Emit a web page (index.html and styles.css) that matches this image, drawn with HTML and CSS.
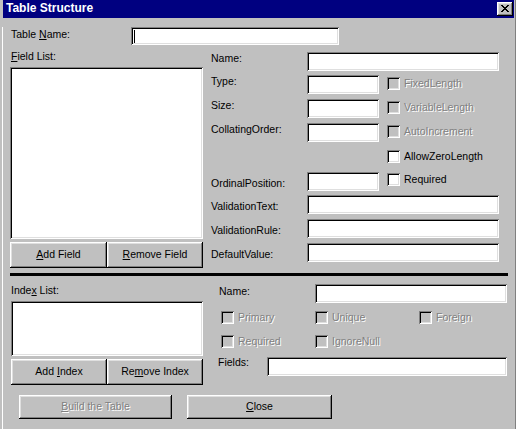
FILE: index.html
```html
<!DOCTYPE html>
<html>
<head>
<meta charset="utf-8">
<title>Table Structure</title>
<link rel="stylesheet" href="styles.css">
</head>
<body>
<div class="window">
  <div class="titlebar">
    <span class="title">Table Structure</span>
    <span class="closebtn"><svg width="8" height="7" viewBox="0 0 8 7" shape-rendering="crispEdges"><path fill="#000" d="M0 0h2v1H0zM6 0h2v1H6zM1 1h2v1H1zM5 1h2v1H5zM2 2h4v1H2zM3 3h2v1H3zM2 4h4v1H2zM1 5h2v1H1zM5 5h2v1H5zM0 6h2v1H0zM6 6h2v1H6z"/></svg></span>
  </div>
  <div class="content">
    <div class="tn-row">
      <span class="lbl tn-lbl">Table <u>N</u>ame:</span>
      <div class="field tn-input"><span class="caret"></span></div>
    </div>

    <div class="upper">
      <div class="fl-col">
        <div class="lbl list-lbl"><u>F</u>ield List:</div>
        <div class="listbox fl-box"></div>
        <div class="btnpair">
          <div class="btn b97"><span><u>A</u>dd Field</span></div>
          <div class="btn b96"><span><u>R</u>emove Field</span></div>
        </div>
      </div>

      <div class="props">
        <div class="prow r1">
          <span class="plbl">Name:</span>
          <div class="field wide"></div>
        </div>
        <div class="prow r2">
          <span class="plbl">Type:</span>
          <div class="field small"></div>
          <div class="chk dis"><span class="box"></span><span class="ctext">FixedLength</span></div>
        </div>
        <div class="prow r3">
          <span class="plbl">Size:</span>
          <div class="field small"></div>
          <div class="chk dis"><span class="box"></span><span class="ctext">VariableLength</span></div>
        </div>
        <div class="prow r4">
          <span class="plbl">CollatingOrder:</span>
          <div class="field small"></div>
          <div class="chk dis"><span class="box"></span><span class="ctext">AutoIncrement</span></div>
        </div>
        <div class="prow r5">
          <div class="chk solo"><span class="box"></span><span class="ctext">AllowZeroLength</span></div>
        </div>
        <div class="prow r6">
          <span class="plbl low">OrdinalPosition:</span>
          <div class="field small"></div>
          <div class="chk req"><span class="box"></span><span class="ctext">Required</span></div>
        </div>
        <div class="prow r7">
          <span class="plbl low">ValidationText:</span>
          <div class="field wide"></div>
        </div>
        <div class="prow r8">
          <span class="plbl low">ValidationRule:</span>
          <div class="field wide"></div>
        </div>
        <div class="prow r9">
          <span class="plbl low">DefaultValue:</span>
          <div class="field wide"></div>
        </div>
      </div>
    </div>

    <div class="sep"></div>

    <div class="lower">
      <div class="il-col">
        <div class="lbl list-lbl">Inde<u>x</u> List:</div>
        <div class="listbox il-box"></div>
        <div class="btnpair">
          <div class="btn b96"><span>Add <u>I</u>ndex</span></div>
          <div class="btn b96"><span>Re<u>m</u>ove Index</span></div>
        </div>
      </div>
      <div class="idx">
        <div class="irow">
          <span class="ilbl">Name:</span>
          <div class="field iwide"></div>
        </div>
        <div class="cgrid g1">
          <div class="chk dis"><span class="box"></span><span class="ctext">Primary</span></div>
          <div class="chk dis"><span class="box"></span><span class="ctext">Unique</span></div>
          <div class="chk dis"><span class="box"></span><span class="ctext">Foreign</span></div>
        </div>
        <div class="cgrid g2">
          <div class="chk dis"><span class="box"></span><span class="ctext">Required</span></div>
          <div class="chk dis"><span class="box"></span><span class="ctext">IgnoreNull</span></div>
        </div>
        <div class="frow">
          <span class="flbl">Fields:</span>
          <div class="field fwide"></div>
        </div>
      </div>
    </div>

    <div class="actions">
      <div class="btn build disabled"><span><u>B</u>uild the Table</span></div>
      <div class="btn close"><span><u>C</u>lose</span></div>
    </div>
  </div>
</div>
</body>
</html>
```

FILE: styles.css
```css
* { box-sizing: border-box; }
html, body { margin: 0; padding: 0; }
body {
  width: 516px;
  height: 429px;
  overflow: hidden;
  background: #c0c0c0;
  font-family: "Liberation Sans", Arial, sans-serif;
  font-size: 10.5px;
  line-height: 13px;
  color: #000;
}
u { text-decoration: underline; text-underline-offset: 1px; }

.window {
  width: 516px;
  height: 429px;
  background: #c0c0c0;
  border-right: 1px solid #808080;
}

.titlebar {
  margin-left: 3px;
  width: 511px;
  height: 18px;
  background: #000080;
  display: flex;
  justify-content: space-between;
  align-items: flex-start;
}
.title {
  color: #fff;
  font-weight: bold;
  font-size: 12px;
  line-height: 17px;
  padding-left: 3px;
}
.closebtn {
  width: 16px;
  height: 14px;
  margin-top: 2px;
  margin-right: 1px;
  background: #c0c0c0;
  box-shadow: inset -1px -1px #000, inset 1px 1px #fff, inset -2px -2px #808080, inset 2px 2px #dfdfdf;
  display: flex;
  align-items: center;
  justify-content: center;
  padding-bottom: 1px;
}
.closebtn svg { display: block; }

.content {
  margin-left: 2px;
  border-left: 1px solid #fff;
  height: 411px;
}

/* sunken fields */
.field, .listbox, .box {
  background: #fff;
  box-shadow: inset 1px 1px #808080, inset -1px -1px #fff, inset 2px 2px #000, inset -2px -2px #dfdfdf;
}

.lbl { white-space: nowrap; }

.tn-row {
  display: flex;
  align-items: flex-start;
  margin-top: 9px;
  padding-left: 8px;
}
.tn-lbl { width: 120px; padding-top: 1px; }
.tn-input {
  width: 208px;
  height: 18px;
  padding: 3px 0 0 3px;
}
.caret { display: block; width: 1px; height: 13px; background: #000; }

.upper {
  display: flex;
  align-items: flex-start;
  margin-top: 5px;
  padding-left: 7px;
}
.fl-col { width: 193px; display: flex; flex-direction: column; }
.list-lbl { padding-left: 1px; }
.fl-box { margin-top: 4px; height: 172px; }
.btnpair { display: flex; margin-top: 3px; }

.btn {
  height: 26px;
  background: #c0c0c0;
  box-shadow: inset -1px -1px #000, inset 1px 1px #fff, inset -2px -2px #808080, inset 2px 2px #dfdfdf;
  display: flex;
  align-items: center;
  justify-content: center;
  white-space: nowrap;
  padding-bottom: 1px;
}
.b97 { width: 97px; }
.b96 { width: 96px; }

.props {
  margin-left: 8px;
  padding-top: 2px;
  display: flex;
  flex-direction: column;
}
.prow { display: flex; align-items: flex-start; height: 19px; }
.r2 { margin-top: 4px; }
.r3, .r4 { margin-top: 5px; }
.r5 { margin-top: 6px; }
.r6 { margin-top: 5px; }
.r7 { margin-top: 4px; }
.r8, .r9 { margin-top: 5px; }
.plbl { width: 96px; white-space: nowrap; }
.plbl.low { padding-top: 5px; }
.field.wide { width: 192px; height: 19px; }
.field.small { width: 72px; height: 19px; }

.chk {
  display: flex;
  align-items: center;
  height: 13px;
  white-space: nowrap;
}
.prow .chk { margin-left: 8px; margin-top: 2px; }
.prow .chk.solo { margin-left: 176px; margin-top: 2px; }
.prow .chk.req { margin-top: 1px; }
.box { width: 13px; height: 13px; flex: none; }
.ctext { margin-left: 4px; }
.chk.dis .box { background: #c0c0c0; }
.chk.dis .ctext, .btn.disabled span {
  color: #808080;
  text-shadow: 1px 1px 0 #fff;
}

.sep {
  margin-top: 5px;
  margin-left: 7px;
  width: 498px;
  height: 3px;
  background: #000;
}

.lower {
  display: flex;
  align-items: flex-start;
  margin-top: 8px;
  padding-left: 8px;
}
.il-col { width: 192px; display: flex; flex-direction: column; }
.il-col .list-lbl { padding-left: 0; }
.il-box { margin-top: 4px; height: 55px; }

.idx { margin-left: 16px; display: flex; flex-direction: column; }
.irow { display: flex; align-items: flex-start; }
.ilbl { width: 96px; padding-top: 1px; }
.field.iwide { width: 192px; height: 19px; }

.cgrid {
  display: grid;
  grid-template-columns: 94px 104px 80px;
  padding-left: 2px;
}
.g1 { margin-top: 8px; }
.g2 { margin-top: 11px; }

.frow { display: flex; align-items: flex-start; margin-top: 9px; margin-left: -1px; }
.flbl { width: 49px; margin-top: -1px; }
.field.fwide { width: 240px; height: 19px; }

.actions {
  display: flex;
  margin-top: 10px;
  padding-left: 16px;
}
.btn.build { width: 153px; height: 24px; }
.btn.close { width: 145px; height: 24px; margin-left: 15px; }
```
